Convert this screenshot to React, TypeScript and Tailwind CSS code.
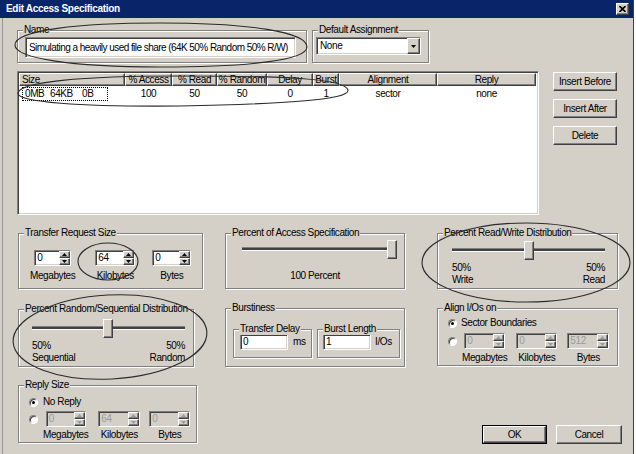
import React from "react";

const sunken =
  "border border-t-[#808080] border-l-[#808080] border-b-white border-r-white shadow-[inset_1px_1px_0_#404040,inset_-1px_-1px_0_#d4d0c8]";
const raised =
  "border border-t-white border-l-white border-b-[#404040] border-r-[#404040] shadow-[inset_-1px_-1px_0_#808080] bg-[#d4d0c8]";

function Group({
  label,
  className = "",
  children,
}: {
  label: string;
  className?: string;
  children?: React.ReactNode;
}) {
  return (
    <div
      className={`relative shrink-0 border border-[#808080] shadow-[inset_1px_1px_0_#fff,1px_1px_0_#fff] ${className}`}
    >
      <span className="absolute -top-[7px] left-[5px] px-[1px] bg-[#d4d0c8] leading-[12px] whitespace-nowrap">
        {label}
      </span>
      {children}
    </div>
  );
}

function Arrow({ up, disabled }: { up?: boolean; disabled?: boolean }) {
  return (
    <svg width="5" height="3" viewBox="0 0 5 3" className="block">
      <polygon
        points={up ? "0,3 5,3 2.5,0" : "0,0 5,0 2.5,3"}
        fill={disabled ? "#9a9a9a" : "#000"}
      />
    </svg>
  );
}

function Spin({
  value,
  className = "",
  disabled,
}: {
  value: string;
  className?: string;
  disabled?: boolean;
}) {
  return (
    <div
      className={`flex h-[16px] shrink-0 ${sunken} ${
        disabled ? "bg-[#d4d0c8] text-[#9a9a9a]" : "bg-white"
      } ${className}`}
    >
      <div className="flex-1 pl-[2px] leading-[14px] overflow-hidden">{value}</div>
      <div className="flex flex-col w-[11px] shrink-0">
        <div className={`flex-1 flex items-center justify-center ${raised}`}>
          <Arrow up disabled={disabled} />
        </div>
        <div className={`flex-1 flex items-center justify-center ${raised}`}>
          <Arrow disabled={disabled} />
        </div>
      </div>
    </div>
  );
}

function SpinCol({
  value,
  label,
  spinClass,
  className = "",
  labelClass = "mt-[4px]",
  disabled,
}: {
  value: string;
  label: string;
  spinClass: string;
  className?: string;
  labelClass?: string;
  disabled?: boolean;
}) {
  return (
    <div className={`flex flex-col items-center ${className}`}>
      <Spin value={value} className={spinClass} disabled={disabled} />
      <span className={`leading-[12px] whitespace-nowrap ${labelClass}`}>{label}</span>
    </div>
  );
}

function Radio({ checked }: { checked?: boolean }) {
  return (
    <div className="w-[9px] h-[9px] shrink-0 rounded-full border border-t-[#808080] border-l-[#808080] border-b-white border-r-white bg-white shadow-[inset_1px_1px_0_#404040] flex items-center justify-center">
      {checked && <div className="w-[3px] h-[3px] rounded-full bg-black" />}
    </div>
  );
}

function Slider({ className, thumb }: { className: string; thumb: string }) {
  return (
    <div className={`relative h-[19px] ${className}`}>
      <div className="absolute left-0 right-0 top-[7px] h-[4px] border-t border-t-[#808080] border-b border-b-white bg-[#404040]" />
      <div className={`absolute top-0 w-[10px] h-[19px] ${raised} ${thumb}`} />
    </div>
  );
}

function Btn({ className = "", children }: { className?: string; children: React.ReactNode }) {
  return (
    <div className={`flex items-center justify-center shrink-0 ${raised} ${className}`}>
      {children}
    </div>
  );
}

const cols = [
  { label: "Size", w: "w-[106px] text-left pl-[2px]" },
  { label: "% Access", w: "w-[47px] text-center" },
  { label: "% Read", w: "w-[45px] text-center" },
  { label: "% Random", w: "w-[50px] text-center" },
  { label: "Delay", w: "w-[46px] text-center" },
  { label: "Burst", w: "w-[26px] text-center" },
  { label: "Alignment", w: "w-[98px] text-center" },
  { label: "Reply", w: "w-[99px] text-center" },
];

export default function App() {
  return (
    <div className="relative w-[636px] h-[454px] bg-white overflow-hidden font-['Liberation_Sans',Arial,sans-serif] text-[10px] tracking-[-0.4px] text-black">
      <div className="w-[634px] h-[454px] bg-[#d4d0c8] border-r border-[#404040]">
        {/* Title bar */}
        <div className="h-[18px] bg-[#0a246a] flex items-center justify-between pl-[6px] pr-[4px]">
          <span className="text-white font-bold leading-[12px] tracking-[-0.3px]">
            Edit Access Specification
          </span>
          <div className={`w-[13px] h-[12px] ${raised} flex items-center justify-center`}>
            <svg width="7" height="6" viewBox="0 0 7 6">
              <path d="M0.5 0 L6.5 6 M6.5 0 L0.5 6" stroke="#000" strokeWidth="1.6" />
            </svg>
          </div>
        </div>

        <div className="ml-[2px] h-[436px] border-l border-[#9a9894] pl-[14px] pt-[12px]">
          {/* Row 1 */}
          <div className="flex">
            <Group label="Name" className="w-[290px] h-[33px] pl-[7px] pt-[6px]">
              <div
                className={`w-[271px] h-[21px] bg-white ${sunken} pl-[3px] leading-[19px] whitespace-nowrap overflow-hidden tracking-[-0.55px]`}
              >
                Simulating a heavily used file share (64K 50% Random 50% R/W)
              </div>
            </Group>
            <Group label="Default Assignment" className="ml-[5px] w-[117px] h-[33px] pl-[3px] pt-[6px]">
              <div className={`w-[105px] h-[18px] bg-white ${sunken} flex`}>
                <span className="flex-1 pl-[3px] leading-[16px]">None</span>
                <div className={`w-[13px] ${raised} flex items-center justify-center`}>
                  <Arrow />
                </div>
              </div>
            </Group>
          </div>

          {/* Row 2 */}
          <div className="flex mt-[8px]">
            <div className={`w-[522px] h-[144px] bg-white ${sunken} p-[1px]`}>
              <div className="flex h-[13px]">
                {cols.map((c) => (
                  <div
                    key={c.label}
                    className={`${c.w} shrink-0 ${raised} leading-[11px] whitespace-nowrap overflow-hidden`}
                  >
                    {c.label}
                  </div>
                ))}
              </div>
              <div className="flex h-[14px] mt-[1px] items-center leading-[12px]">
                <div className="w-[106px] shrink-0 pl-[3px]">
                  <div className="w-[86px] h-[14px] border border-dotted border-black flex items-center">
                    <span className="w-[27px] pl-[2px]">0MB</span>
                    <span className="w-[32px]">64KB</span>
                    <span>0B</span>
                  </div>
                </div>
                <div className="w-[47px] shrink-0 text-center">100</div>
                <div className="w-[45px] shrink-0 text-center">50</div>
                <div className="w-[50px] shrink-0 text-center">50</div>
                <div className="w-[46px] shrink-0 text-center">0</div>
                <div className="w-[26px] shrink-0 text-center">1</div>
                <div className="w-[98px] shrink-0 text-center">sector</div>
                <div className="w-[99px] shrink-0 text-center">none</div>
              </div>
            </div>
            <div className="ml-[14px] mt-[1px] flex flex-col gap-[8px]">
              <Btn className="w-[64px] h-[19px]">Insert Before</Btn>
              <Btn className="w-[64px] h-[19px]">Insert After</Btn>
              <Btn className="w-[64px] h-[19px]">Delete</Btn>
            </div>
          </div>

          {/* Row 3 */}
          <div className="flex mt-[18px]">
            {/* Column 1 */}
            <div className="ml-[1px] w-[185px] flex flex-col shrink-0">
              <Group label="Transfer Request Size" className="w-[185px] h-[56px] pl-[11px] pt-[16px]">
                <div className="flex">
                  <SpinCol value="0" label="Megabytes" spinClass="w-[37px]" />
                  <SpinCol value="64" label="Kilobytes" spinClass="w-[40px]" className="ml-[20px]" />
                  <SpinCol value="0" label="Bytes" spinClass="w-[39px]" className="ml-[17px]" />
                </div>
              </Group>
              <Group
                label="Percent Random/Sequential Distribution"
                className="mt-[20px] w-[176px] h-[58px] pl-[13px] pt-[9px]"
              >
                <Slider className="w-[153px]" thumb="left-[71px]" />
                <div className="flex justify-between w-[153px] mt-[2px] leading-[12px]">
                  <div>
                    50%
                    <br />
                    Sequential
                  </div>
                  <div className="text-right">
                    50%
                    <br />
                    Random
                  </div>
                </div>
              </Group>
              <Group label="Reply Size" className="mt-[18px] w-[179px] h-[58px] pl-[10px] pt-[10px]">
                <div className="flex items-center h-[12px]">
                  <Radio checked />
                  <span className="ml-[5px] leading-[12px]">No Reply</span>
                </div>
                <div className="flex items-start mt-[3px]">
                  <div className="mt-[4px]">
                    <Radio />
                  </div>
                  <SpinCol value="0" label="Megabytes" spinClass="w-[40px]" className="ml-[5px]" labelClass="mt-[2px]" disabled />
                  <SpinCol value="64" label="Kilobytes" spinClass="w-[42px]" className="ml-[10px]" labelClass="mt-[2px]" disabled />
                  <SpinCol value="0" label="Bytes" spinClass="w-[41px]" className="ml-[9px]" labelClass="mt-[2px]" disabled />
                </div>
              </Group>
            </div>

            {/* Column 2 */}
            <div className="ml-[22px] w-[180px] flex flex-col shrink-0">
              <Group label="Percent of Access Specification" className="w-[180px] h-[56px] pt-[6px]">
                <div className="pl-[16px]">
                  <Slider className="w-[155px]" thumb="left-[145px]" />
                </div>
                <div className="text-center mt-[11px] leading-[12px]">100 Percent</div>
              </Group>
              <Group label="Burstiness" className="mt-[19px] w-[180px] h-[59px] pt-[20px] pl-[7px]">
                <div className="flex items-start">
                  <Group label="Transfer Delay" className="w-[79px] h-[29px] pl-[6px] pt-[4px]">
                    <div className="flex items-start">
                      <div className={`w-[48px] h-[16px] bg-white ${sunken} pl-[2px] leading-[14px]`}>0</div>
                      <span className="ml-[5px] leading-[16px]">ms</span>
                    </div>
                  </Group>
                  <Group label="Burst Length" className="ml-[5px] w-[83px] h-[29px] pl-[5px] pt-[4px]">
                    <div className="flex items-start">
                      <div className={`w-[48px] h-[16px] bg-white ${sunken} pl-[2px] leading-[14px]`}>1</div>
                      <span className="ml-[4px] leading-[16px]">I/Os</span>
                    </div>
                  </Group>
                </div>
              </Group>
            </div>

            {/* Column 3 */}
            <div className="ml-[32px] w-[185px] flex flex-col shrink-0">
              <Group label="Percent Read/Write Distribution" className="w-[181px] h-[56px] pl-[14px] pt-[7px]">
                <Slider className="w-[153px]" thumb="left-[72px]" />
                <div className="flex justify-between w-[153px] mt-[2px] leading-[12px]">
                  <div>
                    50%
                    <br />
                    Write
                  </div>
                  <div className="text-right">
                    50%
                    <br />
                    Read
                  </div>
                </div>
              </Group>
              <Group label="Align I/Os on" className="mt-[19px] w-[181px] h-[58px] pl-[10px] pt-[8px]">
                <div className="flex items-center h-[12px]">
                  <Radio checked />
                  <span className="ml-[4px] leading-[12px]">Sector Boundaries</span>
                </div>
                <div className="flex items-start mt-[4px]">
                  <div className="mt-[4px]">
                    <Radio />
                  </div>
                  <SpinCol value="0" label="Megabytes" spinClass="w-[41px]" className="ml-[5px]" labelClass="mt-[3px]" disabled />
                  <SpinCol value="0" label="Kilobytes" spinClass="w-[41px]" className="ml-[9px]" labelClass="mt-[3px]" disabled />
                  <SpinCol value="512" label="Bytes" spinClass="w-[42px]" className="ml-[10px]" labelClass="mt-[3px]" disabled />
                </div>
              </Group>
              <div className="flex mt-[59px]">
                <div className="ml-[45px] w-[65px] h-[19px] border border-black flex">
                  <Btn className="flex-1">OK</Btn>
                </div>
                <Btn className="ml-[9px] w-[66px] h-[19px]">Cancel</Btn>
              </div>
            </div>
          </div>
        </div>
      </div>

      {/* Hand-drawn annotation ellipses */}
      <svg
        className="absolute inset-0 pointer-events-none"
        width="636"
        height="454"
        viewBox="0 0 636 454"
      >
        <g fill="none" stroke="#2b2b2b" strokeWidth="1.1">
          <path d="M15,45 C15,30 80,23 160,23 C250,23 307,32 307,47 C307,60 250,67 160,67 C70,67 15,58 15,45 Z" />
          <path d="M18,93 C20,82 80,76 180,76 C280,76 345,78 348,90 C350,100 280,104 180,106 C80,107 16,102 18,93 Z" />
          <ellipse cx="108" cy="261.5" rx="30" ry="18.5" />
          <ellipse cx="526" cy="262.5" rx="104" ry="39.5" />
          <ellipse cx="110" cy="337" rx="97" ry="42" transform="rotate(-3 110 337)" />
        </g>
      </svg>
    </div>
  );
}
